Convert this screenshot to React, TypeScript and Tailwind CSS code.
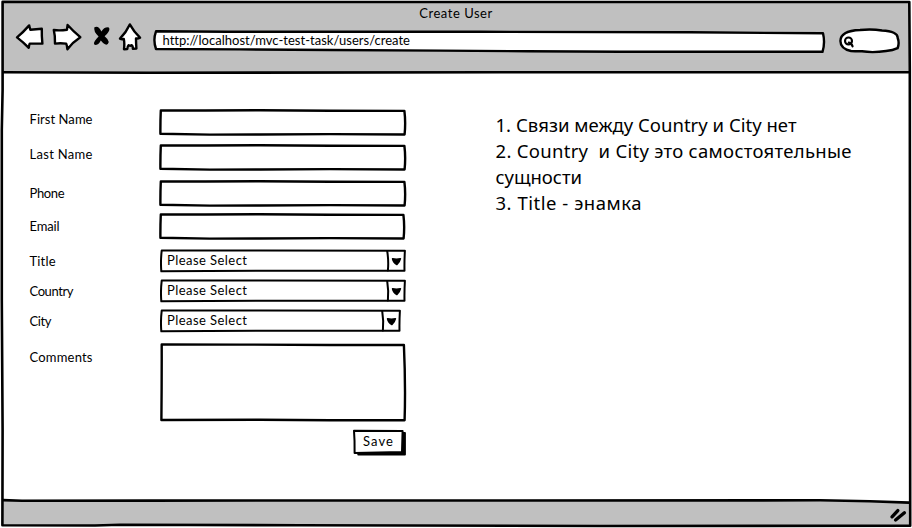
import { useLayoutEffect, useRef, useState } from "react";
import type { ReactNode } from "react";

const INK = "#000";

/** A line of text whose letter spacing is tuned so that it spans `width` pixels. */
function Fit({ text, width, className = "" }: { text: string; width: number; className?: string }) {
  const ref = useRef<HTMLSpanElement>(null);
  const [spacing, setSpacing] = useState(0);
  useLayoutEffect(() => {
    const el = ref.current;
    if (!el) return;
    const natural = el.getBoundingClientRect().width - spacing * text.length;
    setSpacing((width - natural) / (text.length - 1));
  }, [text, width]);
  return (
    <span ref={ref} className={`inline-block whitespace-pre ${className}`} style={{ letterSpacing: `${spacing}px` }}>
      {text}
    </span>
  );
}

/** Hand-drawn strokes that sit behind a control's content. */
function Sketch({ box, children }: { box: string; children: ReactNode }) {
  return (
    <svg
      viewBox={box}
      className="pointer-events-none absolute inset-0 h-full w-full"
      fill="#fff"
      stroke={INK}
      strokeWidth="2.4"
      strokeLinejoin="round"
      strokeLinecap="round"
      preserveAspectRatio="none"
    >
      {children}
    </svg>
  );
}

const iconProps = {
  fill: "#fff",
  stroke: INK,
  strokeWidth: 2.4,
  strokeLinejoin: "round" as const,
  strokeLinecap: "round" as const,
};

function Toolbar() {
  return (
    <div className="flex h-8 items-start pl-[12px]">
      <svg viewBox="15 23 29 28" className="h-7 w-[29px]" {...iconProps}>
        <path d="M17 37.4 Q23 32.5 29.2 25.4 Q29.6 27.5 30.4 29.8 L41.8 28.8 Q41.6 36 42.4 43.6 L29.7 43.6 Q28.9 45.5 28.8 47.8 Q23.5 42.5 17 37.4Z" />
      </svg>
      <svg viewBox="52 23 30 28" className="ml-2 h-7 w-[30px]" {...iconProps}>
        <path d="M53.8 30 Q60 30.8 67 29.7 L67.6 25 Q73.5 31.5 80.3 37.2 Q72.5 42.3 67.4 49.2 Q67.2 46 66.2 43.6 Q60 43 55 43.6 Q55.3 36 53.8 30Z" />
      </svg>
      <svg viewBox="92 23 20 28" className="ml-2.5 h-7 w-5">
        <path
          d="M94.4 27.2 Q98.6 25 101.4 31.6 Q103.8 27 108.3 27.2 Q110.5 28.5 108.4 32 Q106.8 34.8 104.6 36.2 Q108.4 39.2 108.8 42 Q107.7 45.8 105 44.3 Q102.8 43 100.8 40.4 Q98.7 44.9 95 45.1 Q92.9 43.8 95 40.8 Q96.7 38 98.6 36.4 Q93.2 31.3 94.4 27.2Z"
          fill={INK}
        />
      </svg>
      <svg viewBox="118 23 24 28" className="ml-1.5 h-7 w-6" {...iconProps}>
        <path d="M129.8 24.4 Q134 32 140 37.7 Q138 38.8 136 38.4 Q136 43 136.4 48.5 L132.9 48.9 Q132.9 45.5 131.4 45.2 Q130.3 46.3 128.7 45.2 Q127.3 46.6 127.3 49 L124 49.2 Q124.7 43 123.8 39 Q121.7 39.5 120 38.7 Q126 32.5 129.8 24.4Z" />
      </svg>
      <div className="relative ml-2.5 h-8 w-[675px] shrink-0 pl-[10.5px] pt-[9px]">
        <Sketch box="152 23 675 32">
          <path d="M156 31.3 L228 31.7 L480 31.8 L690 32.3 L823 33.3 Q825.3 43 822.5 51.8 L620 51.7 L528 51.3 L440 50.6 L330 50 L240 49.4 L156 49 Q152.8 40 156 31.3Z" />
        </Sketch>
        <Fit text="http://localhost/mvc-test-task/users/create" width={247} className="relative block" />
      </div>
      <div className="relative ml-[11px] h-8 w-[62px] shrink-0">
        <Sketch box="838 23 62 32">
          <path d="M840.4 41 C840.5 33 850 30.4 860 30 Q872 28.9 882 30.5 C892 31 898 33.5 897.7 38 Q899.6 43 897.6 48.2 Q893 50.4 886 51 Q873 53 862 51.3 Q856 51.4 851 51 Q840.5 48.8 840.4 41Z" />
          <circle cx="848.5" cy="41" r="3.5" strokeWidth="2.1" />
          <path d="M848.8 42.6 Q851.6 43 852.6 46.4" fill="none" strokeWidth="2.1" />
        </Sketch>
      </div>
    </div>
  );
}

function TextField({ narrow = false }: { narrow?: boolean }) {
  return (
    <div className={narrow ? "relative h-[27px] w-[247px]" : "relative h-[27px] w-[248px]"}>
      <Sketch box="159 109 248 27">
        <path d="M160.8 110.5 L205 110.5 L260 110.2 L330 110.8 L404.4 110.9 Q405.8 122 404.6 134.5 L330 134.1 L260 134.5 L210 134.6 L160.4 133.8 Q160.3 122 160.8 110.5Z" />
      </Sketch>
    </div>
  );
}

function SelectField({ narrow = false }: { narrow?: boolean }) {
  return (
    <div
      className={
        narrow
          ? "relative ml-px h-6 w-[241px] pl-[7px] pt-[3px]"
          : "relative ml-px h-6 w-[246px] pl-[7px] pt-[3px]"
      }
    >
      <Sketch box={narrow ? "160 249 241 24" : "160 249 246 24"}>
        <g strokeWidth="2">
          {narrow ? (
            <path d="M161.7 250.6 L260 250.4 L399.9 250.7 Q399.3 261 399.5 270.8 L270 270.8 L161.3 271.3 Q160.5 261 161.7 250.6Z" />
          ) : (
            <path d="M161.7 250.6 L260 250.4 L404.9 250.7 Q404.3 261 404.5 270.8 L270 270.8 L161.3 271.3 Q160.5 261 161.7 250.6Z" />
          )}
          <g transform={narrow ? "translate(-5 0)" : undefined}>
            <path d="M387.2 251 Q388.8 261 387.9 270.5" fill="none" />
            <path d="M392.6 258.8 L396.5 259.2 L400.4 258.7 Q400 261.2 396.9 264.5 Q393.2 262.2 392.6 258.8Z" fill={INK} strokeWidth="1.6" />
          </g>
        </g>
      </Sketch>
      <Fit text="Please Select" width={80} className="relative block" />
    </div>
  );
}

function CommentsField() {
  return (
    <div className="relative h-20 w-[248px]">
      <Sketch box="159 343 248 80">
        <path d="M161.7 344.4 L240 344.6 L330 345 L403.9 345 Q405.7 385 404.6 420.3 L330 420.3 L260 419.8 L161.4 420 Q161.8 380 161.7 344.4Z" />
      </Sketch>
    </div>
  );
}

function Row({ label, width, className, labelClass, children }: {
  label: string;
  width: number;
  className: string;
  labelClass: string;
  children: ReactNode;
}) {
  return (
    <div className={`flex items-start ${className}`}>
      <div className={`w-[130px] shrink-0 pl-[0.5px] ${labelClass}`}>
        <Fit text={label} width={width} className="align-top" />
      </div>
      {children}
    </div>
  );
}

function Form() {
  return (
    <form className="w-[407px] pl-[29px] pt-[37px]" onSubmit={(e) => e.preventDefault()}>
      <Row label="First Name" width={63} className="h-[27px]" labelClass="pt-0.5"><TextField /></Row>
      <Row label="Last Name" width={63} className="mt-2 h-[27px]" labelClass="pt-0.5"><TextField /></Row>
      <Row label="Phone" width={35} className="mt-[9px] h-[27px]" labelClass="pt-[5px]"><TextField /></Row>
      <Row label="Email" width={30} className="mt-1.5 h-[27px]" labelClass="pt-[5px]"><TextField narrow /></Row>
      <Row label="Title" width={26} className="mt-[9px] h-6" labelClass="pt-1"><SelectField /></Row>
      <Row label="Country" width={44} className="mt-1.5 h-6" labelClass="pt-1"><SelectField /></Row>
      <Row label="City" width={22} className="mt-1.5 h-6" labelClass="pt-1"><SelectField narrow /></Row>
      <Row label="Comments" width={63} className="mt-2.5 h-20" labelClass="pt-1.5"><CommentsField /></Row>
      <div className="mt-1.5 flex justify-end">
        <button type="submit" className="relative flex h-7 w-[55px] items-start pl-[11px] pt-1">
          <Sketch box="352 429 55 28">
            <path d="M357.8 433 L405 433 L405 454.6 L358.2 454.6Z" fill={INK} strokeWidth="1.8" />
            <path d="M354 430.7 L402.6 430.9 L402 451.9 L354.6 453 Q354.8 441 354 430.7Z" strokeWidth="2" />
          </Sketch>
          <Fit text="Save" width={30} className="relative block" />
        </button>
      </div>
    </form>
  );
}

function Notes() {
  return (
    <div className="ml-[88.5px] flex flex-col items-start pt-[40px] font-['Noto_Sans',sans-serif] text-[18.5px] leading-[26px]">
      <Fit text="1. Связи между Country и City нет" width={301} />
      <Fit text="2. Country  и City это самостоятельные" width={356} />
      <Fit text="сущности" width={86.5} />
      <Fit text="3. Title - энамка" width={146} />
    </div>
  );
}

export default function App() {
  return (
    <div className="relative flex h-[528px] w-[912px] flex-col overflow-hidden bg-white font-['Lato',sans-serif] text-[13px] leading-4 text-black">
      <header className="mx-[3px] mt-0.5 h-[70px] shrink-0 bg-[#c0c0c0] pt-[3px]">
        <div className="flex h-[18px] justify-center">
          <Fit text="Create User" width={73} />
        </div>
        <Toolbar />
      </header>
      <main className="flex h-[428px] shrink-0 items-start">
        <Form />
        <Notes />
      </main>
      <footer className="mx-[3px] flex h-[26px] shrink-0 justify-end">
        <svg viewBox="3 500 906 26" className="h-[26px] w-[906px]">
          <path d="M3 500.5 L820 500.5 L909 502.6 V526 H3Z" fill="#c0c0c0" />
          <path d="M892 516.8 L897.8 510.6 M895.6 520 L904.4 512.8" fill="none" stroke={INK} strokeWidth="3.4" strokeLinecap="round" />
        </svg>
      </footer>
      <svg viewBox="0 0 912 528" className="pointer-events-none absolute inset-0 h-full w-full" fill="none" stroke={INK} strokeWidth="2.6" strokeLinejoin="round">
        <path d="M2.6 1.8 L300 2 L600 2 L909.3 2 L909.8 70 L910.2 525.8 L600 526 L300 525.2 L120 524.8 L95 525.5 L2.4 525.2 L2.6 430 L1.8 300 L1.8 130 L2.6 90Z" />
        <path d="M3 72.3 L150 72.8 L500 72.2 L909 72.3" />
        <path d="M3 500.1 L22 500.7 L150 500.6 L820 500.3 L870 501.3 L909 502.6" />
      </svg>
    </div>
  );
}
